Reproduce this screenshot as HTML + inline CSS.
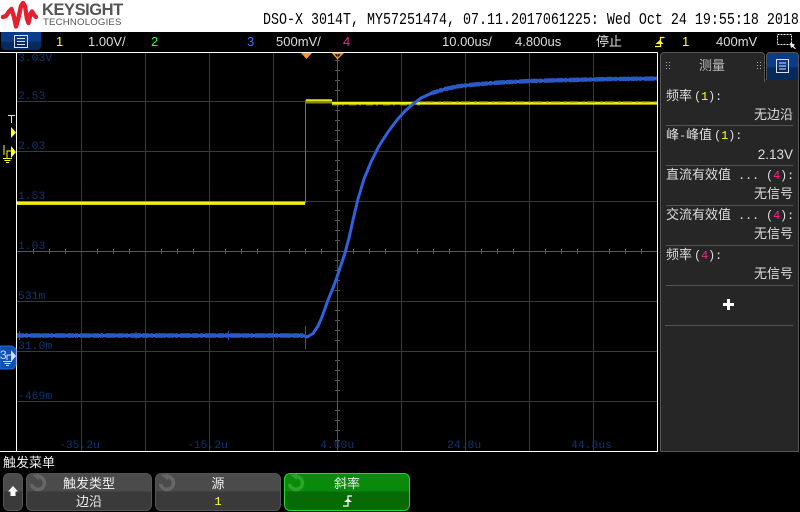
<!DOCTYPE html>
<html><head><meta charset="utf-8"><style>
html,body{margin:0;padding:0;background:#000}
#p{position:relative;width:800px;height:512px;overflow:hidden;background:#000;font-family:"Liberation Sans","WenQuanYi Zen Hei",sans-serif;color:#ddd}
.a{position:absolute;white-space:nowrap}
.t{font-size:13px;line-height:16px}
.pr{position:absolute;left:666px;width:127px;font-size:13px;line-height:16px;color:#ddd;white-space:pre;font-family:"Liberation Sans","WenQuanYi Zen Hei",sans-serif}
.m{font:12px/16px "Liberation Mono",monospace;letter-spacing:-.2px}
.r{text-align:right}
.sep{position:absolute;left:666px;width:127px;height:1px;background:#555}
.btn{position:absolute;top:473px;height:38px;box-sizing:border-box;border:1px solid #555;border-radius:6px;background:linear-gradient(#4b4b4b 0,#4b4b4b 47%,#3a3a3a 50%,#3a3a3a 100%);color:#eee;text-align:center;font-size:13px;line-height:18px}
.btn div{height:18px}
</style></head><body><div id="p">
<div class="a" style="left:0;top:0;width:800px;height:32px;background:#fff"></div>
<svg class="a" style="left:0;top:0" width="40" height="32"><path fill="none" stroke="#e2202f" stroke-width="4.400" stroke-linejoin="round" stroke-linecap="round" d="M3 17L6 16L9 11.500L11.500 9L14 17L16 26.500L18.500 18L21 6L23 3L25 6L27 19L28.500 23L30.500 14L32 11.500L34 15L36 17"/></svg>
<div class="a" style="left:42px;top:1px;font:bold 16.5px/18px 'Liberation Sans';color:#555;letter-spacing:-.45px">KEYSIGHT</div>
<div class="a" style="left:43px;top:17px;font:9.6px/12px 'Liberation Sans';color:#555;letter-spacing:.2px">TECHNOLOGIES</div>
<div class="a" style="left:263px;top:11px;font:17px/20px 'Liberation Mono',monospace;color:#000;transform:scaleX(.784);transform-origin:0 0">DSO-X 3014T, MY57251474, 07.11.2017061225: Wed Oct 24 19:55:18 2018</div>

<!-- status bar -->
<div class="a" style="left:1px;top:32px;width:40px;height:18px;background:linear-gradient(#0a3c88 0,#0a3c88 52%,#062a5c 55%,#062a5c 100%);border-radius:0 0 4px 4px"></div>
<svg class="a" style="left:14px;top:35px" width="15" height="14"><rect x=".5" y=".5" width="13" height="12" fill="none" stroke="#dde"/><path d="M3 3.500H11M3 6.500H11M3 9.500H11" stroke="#dde"/></svg>
<div class="a t" style="left:56px;top:34px;color:#ffff30">1</div>
<div class="a t" style="left:88px;top:34px">1.00V/</div>
<div class="a t" style="left:151px;top:34px;color:#30ff30">2</div>
<div class="a t" style="left:247px;top:34px;color:#4070ff">3</div>
<div class="a t" style="left:276px;top:34px">500mV/</div>
<div class="a t" style="left:343px;top:34px;color:#ff2090">4</div>
<div class="a t" style="left:442px;top:34px">10.00us/</div>
<div class="a t" style="left:515px;top:34px">4.800us</div>
<div class="a t" style="left:596px;top:34px">停止</div>
<svg class="a" style="left:655px;top:36px" width="11" height="12"><path d="M0 10.500H5.500V1.500H9.500" fill="none" stroke="#ffff30" stroke-width="1.200"/><path d="M.5 8H8.500L5 4Z" fill="#ffff30"/></svg>
<div class="a t" style="left:682px;top:34px;color:#ffff30">1</div>
<div class="a t" style="left:716px;top:34px">400mV</div>
<svg class="a" style="left:776px;top:33px" width="24" height="18"><rect x="1.500" y="1.500" width="14" height="10" fill="none" stroke="#eee" stroke-dasharray="2 1"/><path d="M14 10L19 11.500L17.500 13L20 15.500L19 16L16.500 14L15 15Z" fill="#eee"/></svg>

<!-- scope -->
<svg class="a" style="left:0;top:0" width="800" height="512" shape-rendering="crispEdges">
<g stroke="#3a3a3a" stroke-width="1">
<path d="M81.500 53V451M145.500 53V451M209.500 53V451M273.500 53V451M401.500 53V451M465.500 53V451M529.500 53V451M593.500 53V451"/>
<path d="M17 101.500H657M17 151.500H657M17 201.500H657M17 301.500H657M17 351.500H657M17 401.500H657"/>
<path d="M337.500 53V451M17 251.500H657" stroke="#555"/>
<path d="M335 60.500h5M335 70.500h5M335 80.500h5M335 90.500h5M335 110.500h5M335 120.500h5M335 130.500h5M335 140.500h5M335 160.500h5M335 170.500h5M335 180.500h5M335 190.500h5M335 210.500h5M335 220.500h5M335 230.500h5M335 240.500h5M335 260.500h5M335 270.500h5M335 280.500h5M335 290.500h5M335 310.500h5M335 320.500h5M335 330.500h5M335 340.500h5M335 360.500h5M335 370.500h5M335 380.500h5M335 390.500h5M335 410.500h5M335 420.500h5M335 430.500h5M335 440.500h5" stroke="#555"/>
<path d="M305.500 249v5M321.500 249v5M353.500 249v5M369.500 249v5M385.500 249v5M289.500 249v5M257.500 249v5M241.500 249v5M225.500 249v5M193.500 249v5M177.500 249v5M161.500 249v5M129.500 249v5M113.500 249v5M97.500 249v5M65.500 249v5M49.500 249v5M33.500 249v5M417.500 249v5M433.500 249v5M449.500 249v5M481.500 249v5M497.500 249v5M513.500 249v5M545.500 249v5M561.500 249v5M577.500 249v5M609.500 249v5M625.500 249v5M641.500 249v5" stroke="#555"/>
</g>
<path d="M16.500 52V451.500H657.500V52.500" fill="none" stroke="#fff"/>
<path d="M0 52.500H657.500M0 451.500H657.500" stroke="#fff"/>
</svg>
<svg class="a" style="left:17px;top:53px" width="640" height="398" viewBox="17 53 640 398">
<!-- yellow -->
<path d="M305.500 203V100" stroke="#7a7a00" stroke-width="1" fill="none"/>
<path d="M17 203.200H305" stroke="#f5ee10" stroke-width="3.400" fill="none"/>
<path d="M306 100.200H332" stroke="#e6e610" stroke-width="2" fill="none"/>
<path d="M306 102.500H332" stroke="#8a8a10" stroke-width="2" fill="none"/>
<path d="M332 103.300H657" stroke="#f0ea10" stroke-width="2.600" fill="none"/>
<path d="M332 105H420" stroke="#7a7a10" stroke-width="1" stroke-dasharray="7 3 2 5" fill="none"/>
<path d="M420 102H657" stroke="#99940a" stroke-width="1" stroke-dasharray="3 2 9 4" fill="none"/>
<!-- blue -->
<path d="M17 335.500H303L307 337L313 333.500L318 326L322 317L328 300L333 288L337 277L341 265L345 253L349 238L353 220L358 199L364 179L371 162L379 146L388 132L397 120L405 111L413 104L421 98L432 93L445 89L460 86L480 84L500 82.500L530 81L570 80L610 79L657 78.500" stroke="#2f62dc" stroke-width="3" fill="none" stroke-linejoin="round"/>
<path d="M17 335.500H303M432 93L445 89L460 86L480 84L500 82.500L530 81L570 80L610 79L657 78.500" stroke="#2a58c4" stroke-width="4.400" stroke-dasharray="7 1 3 2 11 1" fill="none"/>
<path d="M305.500 326V349" stroke="#2a58c4" stroke-width="1" fill="none"/>
<path d="M19.500 331V340M228.500 331V340M136 332V339" stroke="#2a58c4" stroke-width="1" fill="none"/>
</svg>
<!-- trig markers -->
<svg class="a" style="left:295px;top:52px" width="50" height="10"><path d="M6 1H17L11.500 7Z" fill="#f49a20"/><path d="M38 1.500H47.500L42.500 6.500Z" fill="none" stroke="#f49a20" stroke-width="1.400"/></svg>
<!-- axis labels -->
<div class="a" style="left:0;top:0;font:11.4px/12px 'Liberation Mono',monospace;color:#0f3470">
<span class="a" style="left:18px;top:53px">3.03V</span>
<span class="a" style="left:18px;top:91px">2.53</span>
<span class="a" style="left:18px;top:141px">2.03</span>
<span class="a" style="left:18px;top:191px">1.53</span>
<span class="a" style="left:18px;top:241px">1.03</span>
<span class="a" style="left:18px;top:291px">531m</span>
<span class="a" style="left:18px;top:341px">31.0m</span>
<span class="a" style="left:18px;top:391px">-469m</span>
<span class="a" style="left:59px;top:440px">-35.2u</span>
<span class="a" style="left:187px;top:440px">-15.2u</span>
<span class="a" style="left:320px;top:440px">4.80u</span>
<span class="a" style="left:447px;top:440px">24.8u</span>
<span class="a" style="left:571px;top:440px">44.8us</span>
</div>
<!-- left markers -->
<svg class="a" style="left:0;top:112px" width="17" height="52"><path d="M8 3.500H15M11.500 3.500V11" stroke="#ffff30" fill="none"/><path d="M11 15V26L16 20.500Z" fill="#ffff30"/><path d="M11 34V46L16 40Z" fill="#ffff30"/><path d="M4 33V43M7 46V39H11" stroke="#ffff30" fill="none"/><path d="M3 46.500H12M4.500 48.500H10.500M6 50.500H9" stroke="#ffff30" fill="none"/></svg>
<svg class="a" style="left:0;top:345px" width="17" height="25"><path d="M0 1H12L16 4V20L13 24H0Z" fill="#0f4fb4" stroke="#2a68d8"/><path d="M11 5V17L16 11Z" fill="#cfe0ff"/><path d="M7 15V10H11M3 16.500H12M4.500 18.500H10.500M6 20.500H9" stroke="#cfe0ff" fill="none"/></svg>
<div class="a" style="left:0;top:348px;font:12px/14px 'Liberation Sans';color:#cfe0ff">3</div>

<!-- side panel -->
<div class="a" style="left:660px;top:79px;width:139px;height:373px;box-sizing:border-box;border:1px solid #555;border-top:0;background:#262626"></div>
<div class="a" style="left:660px;top:52px;width:105px;height:30px;box-sizing:border-box;border:1px solid #555;border-bottom:0;border-radius:4px 4px 0 0;background:#262626"></div>
<div class="a" style="left:766px;top:52px;width:33px;height:28px;box-sizing:border-box;border:1px solid #555;border-bottom:0;border-radius:4px 4px 0 0;background:linear-gradient(#0a3c88 0,#0a3c88 52%,#062a5c 55%,#062a5c 100%)"></div>
<svg class="a" style="left:776px;top:59px" width="14" height="15"><rect x=".5" y=".5" width="12" height="13" fill="none" stroke="#dde"/><path d="M3 4H10M3 7H10M3 10H10" stroke="#dde"/></svg>
<div class="a" style="left:699px;top:57px;font-size:13px;line-height:18px;color:#bbb">测量</div>
<svg class="a" style="left:665px;top:61px" width="100" height="9" fill="#aaa"><path d="M1 1h1v1H1zM4 1h1v1H4zM1 4h1v1H1zM4 4h1v1H4zM1 7h1v1H1zM4 7h1v1H4zM92 1h1v1h-1zM95 1h1v1h-1zM92 4h1v1h-1zM95 4h1v1h-1zM92 7h1v1h-1zM95 7h1v1h-1z"/></svg>

<div class="pr" style="top:88px">频率<span class="m" style="margin-left:2px">(<span style="color:#ffff30">1</span>):</span></div>
<div class="pr r" style="top:107px">无边沿</div><div class="sep" style="top:125px"></div>
<div class="pr" style="top:127px">峰<span class="m">-</span>峰值<span class="m" style="margin-left:2px">(<span style="color:#ffff30">1</span>):</span></div>
<div class="pr r" style="top:147px;font-size:13.5px">2.13V</div><div class="sep" style="top:165px"></div>
<div class="pr" style="top:167px">直流有效值<span class="m"> ... (<span style="color:#ff2090">4</span>):</span></div>
<div class="pr r" style="top:186px">无信号</div><div class="sep" style="top:205px"></div>
<div class="pr" style="top:207px">交流有效值<span class="m"> ... (<span style="color:#ff2090">4</span>):</span></div>
<div class="pr r" style="top:226px">无信号</div><div class="sep" style="top:245px"></div>
<div class="pr" style="top:247px">频率<span class="m" style="margin-left:2px">(<span style="color:#ff2090">4</span>):</span></div>
<div class="pr r" style="top:266px">无信号</div><div class="sep" style="top:285px"></div>
<svg class="a" style="left:723px;top:299px" width="11" height="11"><path d="M4 0H7V4H11V7H7V11H4V7H0V4H4Z" fill="#fff"/></svg>
<div class="sep" style="top:325px;left:665px;width:128px"></div>

<!-- softkeys -->
<div class="a" style="left:3px;top:455px;font-size:13px;line-height:16px;color:#eee">触发菜单</div>
<div class="btn" style="left:3px;width:20px"></div>
<svg class="a" style="left:7px;top:485px" width="12" height="13"><path d="M6 1L11 6.500H8.500V11H3.500V6.500H1Z" fill="#fff"/></svg>
<div class="btn" style="left:26px;width:126px"><div style="margin-top:1px">触发类型</div><div>边沿</div></div>
<div class="btn" style="left:155px;width:126px"><div style="margin-top:1px">源</div><div class="m" style="color:#ffff30;line-height:18px;letter-spacing:0">1</div></div>
<div class="btn" style="left:284px;width:126px;border-color:#2fd02f;background:linear-gradient(#0a8a0a 0,#0a8a0a 47%,#066a06 50%,#066a06 100%)"><div style="margin-top:1px">斜率</div><div></div></div>
<svg class="a" style="left:342px;top:494px" width="12" height="14"><path d="M1 12H6V2H10" fill="none" stroke="#fff" stroke-width="1.200"/><path d="M2 8H10L6 4.500Z" fill="#fff"/></svg>
<svg class="a" style="left:0;top:474px" width="420" height="20" fill="none" stroke-width="3.600">
<g stroke="#666"><path d="M37 2.500A6.500 6.500 0 1 1 31.500 10"/><path d="M166 2.500A6.500 6.500 0 1 1 160.500 10"/></g>
<path d="M295 2.500A6.500 6.500 0 1 1 289.500 10" stroke="#2aa62a"/>
<path d="M32 1L39 0V6Z" fill="#666"/><path d="M161 1L168 0V6Z" fill="#666"/><path d="M290 1L297 0V6Z" fill="#2aa62a"/>
</svg>
</div></body></html>
